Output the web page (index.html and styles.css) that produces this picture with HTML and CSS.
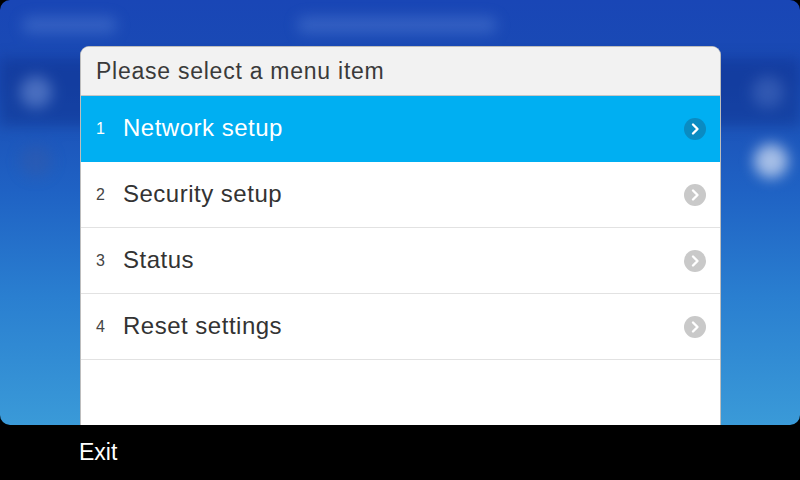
FILE: index.html
```html
<!DOCTYPE html>
<html>
<head>
<meta charset="utf-8">
<link rel="stylesheet" href="styles.css">
</head>
<body>
<div class="device">
  <div class="screen">
    <div class="bg">
      <div class="bg-top">
        <span class="blob blob-a"></span>
        <span class="blob blob-b"></span>
      </div>
      <div class="bg-band">
        <span class="dot dot-l1"></span>
        <span class="dot dot-r1"></span>
      </div>
      <div class="bg-row">
        <span class="dot dot-l2"></span>
        <span class="dot dot-r2"></span>
      </div>
    </div>
    <div class="dialog">
      <div class="dialog-head">Please select a menu item</div>
      <ul class="menu">
        <li class="item active"><span class="num">1</span><span class="label">Network setup</span><svg class="chev" viewBox="0 0 22 22"><circle cx="11" cy="11" r="11"/><path d="M9 6.5 L13.5 11 L9 15.5"/></svg></li>
        <li class="item"><span class="num">2</span><span class="label">Security setup</span><svg class="chev" viewBox="0 0 22 22"><circle cx="11" cy="11" r="11"/><path d="M9 6.5 L13.5 11 L9 15.5"/></svg></li>
        <li class="item"><span class="num">3</span><span class="label">Status</span><svg class="chev" viewBox="0 0 22 22"><circle cx="11" cy="11" r="11"/><path d="M9 6.5 L13.5 11 L9 15.5"/></svg></li>
        <li class="item"><span class="num">4</span><span class="label">Reset settings</span><svg class="chev" viewBox="0 0 22 22"><circle cx="11" cy="11" r="11"/><path d="M9 6.5 L13.5 11 L9 15.5"/></svg></li>
      </ul>
    </div>
  </div>
  <div class="softkeys">
    <span class="softkey">Exit</span>
  </div>
</div>
</body>
</html>
```
FILE: styles.css
```css
* { box-sizing: border-box; }
html, body { margin: 0; padding: 0; }
body {
  width: 800px;
  height: 480px;
  overflow: hidden;
  background: #000;
  font-family: "Liberation Sans", Arial, sans-serif;
}
.device {
  display: flex;
  flex-direction: column;
  width: 800px;
  height: 480px;
}
.screen {
  position: relative;
  height: 425px;
  border-radius: 10px;
  overflow: hidden;
  background: linear-gradient(180deg, #1946b6 0%, #1a4cb4 20%, #1f62c4 45%, #2a7fd0 70%, #3a9ad8 100%);
}
.bg {
  display: flex;
  flex-direction: column;
  height: 100%;
  filter: blur(7px);
}
.bg-top {
  height: 58px;
  display: flex;
  align-items: center;
  padding: 0 0 8px 22px;
  gap: 180px;
}
.blob {
  display: block;
  height: 16px;
  border-radius: 8px;
  background: rgba(120, 160, 230, 0.3);
}
.blob-a { width: 95px; }
.blob-b { width: 200px; }
.bg-band {
  height: 68px;
  display: flex;
  align-items: center;
  justify-content: space-between;
  padding: 0 16px 0 20px;
  background: rgba(10, 40, 130, 0.4);
}
.bg-row {
  height: 70px;
  display: flex;
  align-items: center;
  justify-content: space-between;
  padding: 0 12px 0 20px;
}
.dot {
  display: block;
  width: 32px;
  height: 32px;
  border-radius: 50%;
}
.dot-l1 { background: rgba(140, 170, 230, 0.45); }
.dot-r1 { background: rgba(120, 150, 220, 0.3); }
.dot-l2 { background: rgba(60, 90, 160, 0.35); }
.dot-r2 { background: rgba(200, 215, 240, 0.8); width: 34px; height: 34px; }

.dialog {
  position: absolute;
  left: 80px;
  top: 46px;
  width: 641px;
  height: 379px;
  background: #fff;
  border: 1px solid #bdbdbd;
  border-bottom: none;
  border-radius: 9px 9px 0 0;
  overflow: hidden;
}
.dialog-head {
  height: 49px;
  background: #f2f2f2;
  border-bottom: 1px solid #c6c6c6;
  padding: 9px 0 0 15px;
  font-size: 23px;
  letter-spacing: 0.75px;
  color: #3a3a3a;
  line-height: 30px;
}
.menu {
  list-style: none;
  margin: 0;
  padding: 0;
}
.item {
  height: 66px;
  display: flex;
  align-items: center;
  padding: 0 14px 0 15px;
  border-bottom: 1px solid #e2e2e2;
  color: #333;
}
.item.active {
  background: #00aff2;
  color: #fff;
  border-bottom-color: #00aff2;
}
.num {
  width: 27px;
  font-size: 16px;
  color: #444;
}
.active .num { color: #fff; }
.label {
  flex: 1;
  font-size: 24px;
  letter-spacing: 0.5px;
  padding-bottom: 2px;
}
.chev {
  width: 22px;
  height: 22px;
}
.chev circle { fill: #c9c9c9; }
.chev path {
  fill: none;
  stroke: #fff;
  stroke-width: 2.4;
  stroke-linecap: round;
  stroke-linejoin: round;
}
.active .chev circle { fill: #0a8bc2; }

.softkeys {
  flex: 1;
  display: flex;
  align-items: center;
  padding: 0 0 0 79px;
}
.softkey {
  color: #fff;
  font-size: 23px;
}
```
